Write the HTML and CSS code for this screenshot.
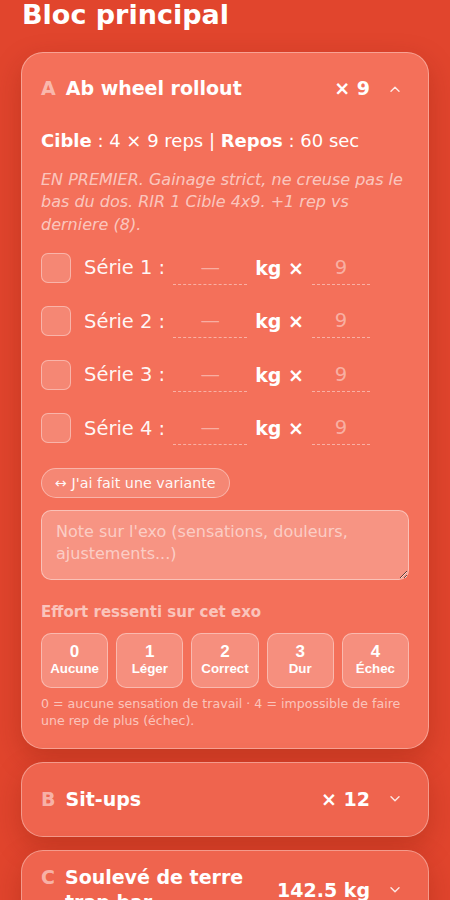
FILE: index.html
```html
<!DOCTYPE html>
<html lang="fr">
<head>
<meta charset="utf-8">
<title>Bloc principal</title>
<link rel="stylesheet" href="styles.css">
</head>
<body>
<main class="page">
  <h2 class="block-title">Bloc principal</h2>

  <section class="card card-open">
    <header class="ex-head">
      <div class="ex-title"><span class="ex-letter">A</span><span class="ex-name">Ab wheel rollout</span></div>
      <span class="ex-meta">× 9</span>
      <button class="chev" aria-label="Replier">
        <svg width="10" height="6" viewBox="0 0 10 6"><polyline points="1,5.2 5,1.2 9,5.2" fill="none" stroke="currentColor" stroke-width="1.4" stroke-linecap="round" stroke-linejoin="round"/></svg>
      </button>
    </header>
    <div class="ex-body">
      <p class="target"><b>Cible</b> : 4 × 9 reps | <b>Repos</b> : 60 sec</p>
      <p class="note">EN PREMIER. Gainage strict, ne creuse pas le bas du dos. RIR 1 Cible 4x9. +1 rep vs derniere (8).</p>

      <div class="sets">
        <div class="set-row">
          <input type="checkbox" class="set-check">
          <span class="set-label">Série 1 :</span>
          <input class="set-input kg" placeholder="—">
          <span class="set-unit">kg ×</span>
          <input class="set-input reps" placeholder="9">
        </div>
        <div class="set-row">
          <input type="checkbox" class="set-check">
          <span class="set-label">Série 2 :</span>
          <input class="set-input kg" placeholder="—">
          <span class="set-unit">kg ×</span>
          <input class="set-input reps" placeholder="9">
        </div>
        <div class="set-row">
          <input type="checkbox" class="set-check">
          <span class="set-label">Série 3 :</span>
          <input class="set-input kg" placeholder="—">
          <span class="set-unit">kg ×</span>
          <input class="set-input reps" placeholder="9">
        </div>
        <div class="set-row">
          <input type="checkbox" class="set-check">
          <span class="set-label">Série 4 :</span>
          <input class="set-input kg" placeholder="—">
          <span class="set-unit">kg ×</span>
          <input class="set-input reps" placeholder="9">
        </div>
      </div>

      <button class="variant">↔ J'ai fait une variante</button>

      <textarea class="exo-note" placeholder="Note sur l'exo (sensations, douleurs, ajustements...)"></textarea>

      <div class="effort-label">Effort ressenti sur cet exo</div>
      <div class="effort">
        <button class="effort-btn"><span class="effort-num">0</span><span class="effort-txt">Aucune</span></button>
        <button class="effort-btn"><span class="effort-num">1</span><span class="effort-txt">Léger</span></button>
        <button class="effort-btn"><span class="effort-num">2</span><span class="effort-txt">Correct</span></button>
        <button class="effort-btn"><span class="effort-num">3</span><span class="effort-txt">Dur</span></button>
        <button class="effort-btn"><span class="effort-num">4</span><span class="effort-txt">Échec</span></button>
      </div>
      <p class="hint">0 = aucune sensation de travail · 4 = impossible de faire une rep de plus (échec).</p>
    </div>
  </section>

  <section class="card">
    <header class="ex-head">
      <div class="ex-title"><span class="ex-letter">B</span><span class="ex-name">Sit-ups</span></div>
      <span class="ex-meta">× 12</span>
      <button class="chev" aria-label="Déplier">
        <svg width="10" height="6" viewBox="0 0 10 6"><polyline points="1,0.8 5,4.8 9,0.8" fill="none" stroke="currentColor" stroke-width="1.4" stroke-linecap="round" stroke-linejoin="round"/></svg>
      </button>
    </header>
  </section>

  <section class="card">
    <header class="ex-head">
      <div class="ex-title"><span class="ex-letter">C</span><span class="ex-name">Soulevé de terre trap bar</span></div>
      <span class="ex-meta">142.5 kg</span>
      <button class="chev" aria-label="Déplier">
        <svg width="10" height="6" viewBox="0 0 10 6"><polyline points="1,0.8 5,4.8 9,0.8" fill="none" stroke="currentColor" stroke-width="1.4" stroke-linecap="round" stroke-linejoin="round"/></svg>
      </button>
    </header>
  </section>
</main>
</body>
</html>
```

FILE: styles.css
```css
* { box-sizing: border-box; }

html, body {
  margin: 0;
  background: #e1452d;
}

body {
  font-family: "DejaVu Sans", sans-serif;
  color: #ffffff;
  overflow: hidden;
  height: 900px;
}

.page {
  padding: 0 21px;
  display: flex;
  flex-direction: column;
  gap: 13px;
}

.block-title {
  margin: 0 0 9px 1px;
  font-size: 27px;
  line-height: 30px;
  font-weight: 700;
  color: #fff;
}

.card {
  background: #ef644e;
  border: 1px solid rgba(255, 255, 255, 0.35);
  border-radius: 22px;
  padding: 0 19px;
  box-shadow: 0 10px 28px rgba(120, 20, 5, 0.28);
}

.card-open {
  background: #f4705a;
  padding-bottom: 19px;
}

.ex-head {
  display: flex;
  align-items: center;
  padding: 14.5px 0;
  min-height: 73px;
}

.card-open .ex-head {
  padding: 13.5px 0 14.5px;
  min-height: 72px;
}

.ex-title {
  flex: 1;
  display: flex;
  align-items: flex-start;
  gap: 10px;
  min-width: 0;
}

.ex-letter {
  font-size: 19px;
  font-weight: 700;
  color: rgba(255, 255, 255, 0.52);
  line-height: 25px;
}

.ex-name {
  flex: 1;
  font-size: 19px;
  font-weight: 700;
  line-height: 25px;
}

.ex-meta {
  font-size: 19px;
  font-weight: 700;
  line-height: 25px;
  margin-left: 12px;
  white-space: nowrap;
}

.chev {
  width: 28px;
  height: 44px;
  margin-left: 11px;
  padding: 0;
  border: 0;
  background: transparent;
  color: rgba(255, 255, 255, 0.85);
  display: flex;
  align-items: center;
  justify-content: center;
}

.ex-body {
  display: flex;
  flex-direction: column;
  align-items: flex-start;
}

.target {
  margin: 1.5px 0 0;
  font-size: 18px;
  line-height: 27px;
}

.target b { font-weight: 700; }

.note {
  margin: 15px 0 0;
  font-size: 16px;
  line-height: 22.5px;
  font-style: italic;
  color: rgba(255, 255, 255, 0.62);
}

.sets {
  margin-top: 4.75px;
  width: 100%;
}

.set-row {
  height: 53.5px;
  display: flex;
  align-items: center;
  gap: 8px;
}

.set-check {
  appearance: none;
  -webkit-appearance: none;
  margin: 0 5px 0 0;
  width: 30px;
  height: 30px;
  border-radius: 7px;
  border: 1px solid rgba(255, 255, 255, 0.38);
  background: rgba(255, 255, 255, 0.16);
  flex: none;
}

.set-label {
  font-size: 19.5px;
  color: rgba(255, 255, 255, 0.95);
  white-space: nowrap;
}

.set-input {
  height: 34px;
  border: 0;
  border-bottom: 1px dashed rgba(255, 255, 255, 0.45);
  background: transparent;
  font-family: "DejaVu Sans", sans-serif;
  font-size: 19.5px;
  color: #fff;
  text-align: center;
  padding: 0;
  outline: none;
  flex: none;
}

.set-input::placeholder { color: rgba(255, 255, 255, 0.45); }

.set-input.kg { width: 74px; }
.set-input.reps { width: 58px; }

.set-unit {
  font-size: 19px;
  font-weight: 700;
  white-space: nowrap;
}

.variant {
  margin-top: 12.75px;
  height: 30px;
  padding: 0 13px;
  border-radius: 15px;
  border: 1px solid rgba(255, 255, 255, 0.38);
  background: rgba(255, 255, 255, 0.16);
  color: rgba(255, 255, 255, 0.95);
  font-family: "DejaVu Sans", sans-serif;
  font-size: 14.3px;
}

.exo-note {
  margin-top: 12px;
  width: 100%;
  height: 70px;
  padding: 10px 14px;
  border-radius: 10px;
  border: 1px solid rgba(255, 255, 255, 0.42);
  background: rgba(255, 255, 255, 0.25);
  color: #fff;
  font-family: "DejaVu Sans", sans-serif;
  font-size: 16px;
  line-height: 22px;
  outline: none;
  display: block;
}

.exo-note::placeholder { color: rgba(255, 255, 255, 0.55); }

.effort-label {
  margin-top: 21px;
  font-size: 15px;
  line-height: 22.5px;
  font-weight: 700;
  color: rgba(255, 255, 255, 0.6);
}

.effort {
  margin-top: 9.5px;
  width: 100%;
  display: grid;
  grid-template-columns: repeat(5, 1fr);
  gap: 8px;
}

.effort-btn {
  height: 55px;
  padding: 0;
  border-radius: 10px;
  border: 1px solid rgba(255, 255, 255, 0.38);
  background: rgba(255, 255, 255, 0.22);
  color: #fff;
  font-family: "Liberation Sans", Arial, sans-serif;
  font-weight: 700;
  display: flex;
  flex-direction: column;
  align-items: center;
  justify-content: center;
}

.effort-num {
  font-size: 17px;
  line-height: 18px;
}

.effort-txt {
  font-size: 13.333px;
  line-height: 16px;
}

.hint {
  margin: 7px 0 0;
  font-size: 12.6px;
  line-height: 17px;
  color: rgba(255, 255, 255, 0.6);
}
```
